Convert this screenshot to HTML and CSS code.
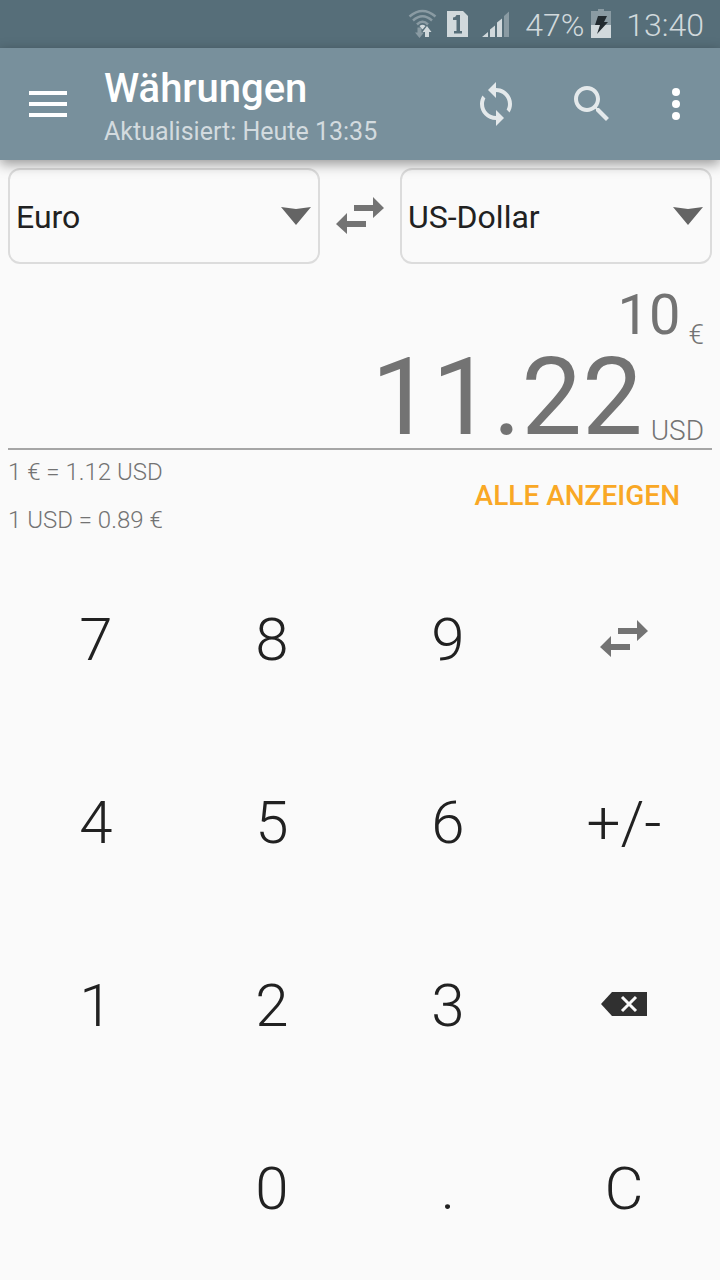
FILE: index.html
```html
<!DOCTYPE html>
<html lang="de">
<head>
<meta charset="utf-8">
<meta name="viewport" content="width=device-width, initial-scale=1">
<title>Währungen</title>
<link rel="stylesheet" href="styles.css">
</head>
<body>
<div class="app">
  <div class="status">
    <svg class="status-signals" width="104" height="32" viewBox="0 0 104 32" aria-hidden="true">
      <g fill="none" stroke="#8a9ba3" stroke-width="2.500">
        <path d="M1.500 7.500Q14.500-3.500 27.500 7.500"/>
        <path d="M5 11.500Q14.500 3 24 11.500"/>
        <path d="M9 15.500Q14.500 10 20 15.500"/>
      </g>
      <path fill="#8a9ba3" d="M9.500 18.500h4v5h2.500l-4.500 5.500-4.500-5.500h2.500z"/>
      <path fill="#d1d9dc" d="M11.500 17q3-2.500 6 0l-3 3.500zM17 28v-5h-2.500l4.500-6 4.500 6H21v5z"/>
      <path fill="#d1d9dc" d="M39 2h16l5 5v21H39z"/>
      <path fill="#566e79" d="M48.500 6H52v16h2v2.500h-8V22h2.500V11H45V8.500q2.500 0 3.500-2.500z"/>
      <path fill="#d1d9dc" d="M74 28l6-5v5zM82 20.500l5-4V28h-5zM89 13.500l5-4V28h-5z"/>
      <path fill="#8a9ba3" d="M96 7l5-4.500V28h-5z"/>
    </svg>
    <span class="percent">47%</span>
    <svg class="battery" width="20" height="32" viewBox="0 0 20 32" aria-hidden="true">
      <path fill="#8a9ba3" d="M0 2h7V0h6v2h7v14H0z"/>
      <path fill="#d1d9dc" d="M0 16h20v13H0z"/>
      <path fill="#222b30" d="M7 7h9l-3 6h4L6 25l3-9H4z"/>
    </svg>
    <span>13:40</span>
  </div>
  <header class="bar">
    <button class="icon-btn menu" aria-label="Menü">
      <svg width="38" height="26" viewBox="0 0 38 26"><path fill="#fff" d="M0 0h38v4H0zM0 11h38v4H0zM0 22h38v4H0z"/></svg>
    </button>
    <div class="heading">
      <h1>Währungen</h1>
      <p>Aktualisiert: Heute 13:35</p>
    </div>
    <button class="icon-btn" aria-label="Aktualisieren">
      <svg width="48" height="48" viewBox="0 0 24 24"><path fill="#e4e9eb" d="M12 4V1L8 5l4 4V6c3.310 0 6 2.690 6 6 0 1.010-.25 1.970-.7 2.800l1.460 1.460C19.540 15.030 20 13.570 20 12c0-4.420-3.580-8-8-8zm0 14c-3.310 0-6-2.690-6-6 0-1.010.25-1.970.7-2.800L5.240 7.740C4.460 8.970 4 10.430 4 12c0 4.420 3.580 8 8 8v3l4-4-4-4v3z"/></svg>
    </button>
    <button class="icon-btn" aria-label="Suchen">
      <svg width="48" height="48" viewBox="0 0 24 24"><path fill="#e4e9eb" d="M15.500 14h-.79l-.28-.27C15.410 12.590 16 11.110 16 9.500 16 5.910 13.090 3 9.500 3S3 5.910 3 9.500 5.910 16 9.500 16c1.610 0 3.090-.59 4.230-1.570l.27.280v.79l5 4.990L20.490 19l-4.990-5zm-6 0C7.010 14 5 11.990 5 9.500S7.010 5 9.500 5 14 7.010 14 9.500 11.990 14 9.500 14z"/></svg>
    </button>
    <button class="icon-btn more" aria-label="Weitere Optionen">
      <svg width="8" height="32" viewBox="0 0 8 32" fill="#fff"><circle cx="4" cy="4" r="4"/><circle cx="4" cy="16" r="4"/><circle cx="4" cy="28" r="4"/></svg>
    </button>
  </header>

  <main class="content">
    <div class="currencies">
      <div class="picker">
        <select aria-label="Von"><option>Euro</option></select>
        <svg class="caret" width="32" height="20" viewBox="0 0 32 20" aria-hidden="true"><path fill="#646464" d="M1 1L16 3 31 1 16 19z"/></svg>
      </div>
      <button class="swap" aria-label="Währungen tauschen">
        <svg width="48" height="38" viewBox="0 0 48 38"><path fill="#737373" d="M18 8h19V0l11 11-11 10v-7H18zM30 30H11v7L0 27l11-11v8h19z"/></svg>
      </button>
      <div class="picker">
        <select aria-label="Nach"><option>US-Dollar</option></select>
        <svg class="caret" width="32" height="20" viewBox="0 0 32 20" aria-hidden="true"><path fill="#646464" d="M1 1L16 3 31 1 16 19z"/></svg>
      </div>
    </div>

    <div class="display">
      <div class="amount source"><span class="value">10</span><span class="unit">€</span></div>
      <div class="amount result"><span class="value">11.22</span><span class="unit">USD</span></div>
    </div>

    <div class="details">
      <div class="rates">
        <p>1 € = 1.12 USD</p>
        <p>1 USD = 0.89 €</p>
      </div>
      <button class="show-all">ALLE ANZEIGEN</button>
    </div>

    <div class="keypad">
      <button>7</button><button>8</button><button>9</button>
      <button aria-label="Tauschen"><svg width="48" height="40" viewBox="0 0 48 40"><path fill="#737373" d="M18 8h19V0l11 11-11 10v-7H18zM30 30H11v7L0 27l11-11v8h19z"/></svg></button>
      <button>4</button><button>5</button><button>6</button><button>+/-</button>
      <button>1</button><button>2</button><button>3</button>
      <button aria-label="Löschen"><svg width="48" height="28" viewBox="0 0 48 28"><path fill="#303030" d="M12 0h35v24H12L1 12z"/><path d="M22 5l14 14M36 5L22 19" fill="none" stroke="#fafafa" stroke-width="3"/></svg></button>
      <button class="zero">0</button><button>.</button><button>C</button>
    </div>
  </main>
</div>
</body>
</html>
```

FILE: styles.css
```css
* {
  box-sizing: border-box;
}

body {
  margin: 0;
  background: #fafafa;
  color: #212121;
  font-family: Roboto, "Noto Sans", sans-serif;
}

h1,
p {
  margin: 0;
}

button {
  padding: 0;
  border: 0;
  background: none;
  color: inherit;
  font: inherit;
  cursor: pointer;
}

svg {
  display: block;
}

.app {
  display: flex;
  flex-direction: column;
  min-height: 100vh;
}

.status {
  display: flex;
  align-items: center;
  justify-content: flex-end;
  height: 48px;
  padding: 2px 16px 0 0;
  background: #566e79;
  color: #d1d9dc;
  font-size: 32px;
  font-weight: 300;
}

.percent {
  margin: 0 7px 0 13px;
}

.battery {
  margin-right: 15px;
}

.bar {
  position: relative;
  z-index: 1;
  display: flex;
  align-items: center;
  height: 112px;
  padding-right: 16px;
  background: #78909c;
  box-shadow: 0 4px 12px rgba(0, 0, 0, 0.4);
}

.icon-btn {
  display: flex;
  align-items: center;
  justify-content: center;
  width: 96px;
  height: 96px;
}

.menu {
  margin-right: 8px;
}

.heading {
  flex: 1;
  padding-top: 8px;
  color: #fff;
}

.heading h1 {
  font-size: 40px;
  font-weight: 500;
  line-height: 48px;
}

.heading p {
  color: #d3dbdf;
  font-size: 25px;
  line-height: 38px;
}

.more {
  width: 56px;
  margin-left: 8px;
}

.content {
  flex: 1;
  display: flex;
  flex-direction: column;
  padding: 8px 8px 0;
}

.currencies {
  display: flex;
  align-items: center;
  gap: 16px;
}

.picker {
  position: relative;
  flex: 1;
}

.picker select {
  display: block;
  width: 100%;
  height: 96px;
  padding: 2px 40px 0 6px;
  border: 2px solid #dcdcdc;
  border-radius: 12px;
  background: #fafafa;
  color: #212121;
  font: 400 32px Roboto, "Noto Sans", sans-serif;
  appearance: none;
}

.caret {
  position: absolute;
  top: 38px;
  right: 8px;
  pointer-events: none;
}

.display {
  padding: 20px 8px 0;
  border-bottom: 2px solid #a6a6a6;
  color: #737373;
}

.amount {
  display: flex;
  align-items: flex-end;
  justify-content: flex-end;
}

.source .value {
  margin-right: 8px;
  font-size: 56px;
  line-height: 62px;
}

.result .value {
  margin-right: 8px;
  font-size: 108px;
  line-height: 102px;
}

.unit {
  font-size: 28px;
  font-weight: 300;
}

.source .unit {
  line-height: 22px;
}

.result .unit {
  line-height: 34px;
}

.details {
  display: flex;
  align-items: center;
  justify-content: space-between;
  padding-right: 32px;
}

.rates {
  display: grid;
  gap: 4px;
  color: #737373;
  font-size: 24px;
  font-weight: 300;
  line-height: 44px;
}

.show-all {
  padding-bottom: 2px;
  color: #f9a825;
  font-size: 28px;
  font-weight: 500;
}

.keypad {
  flex: 1;
  display: grid;
  grid-template-columns: repeat(4, 1fr);
  grid-auto-rows: 1fr;
  margin-top: 6px;
  font-size: 60px;
  font-weight: 300;
}

.keypad button {
  display: flex;
  align-items: center;
  justify-content: center;
}

.keypad .zero {
  grid-column: 2;
}
```
